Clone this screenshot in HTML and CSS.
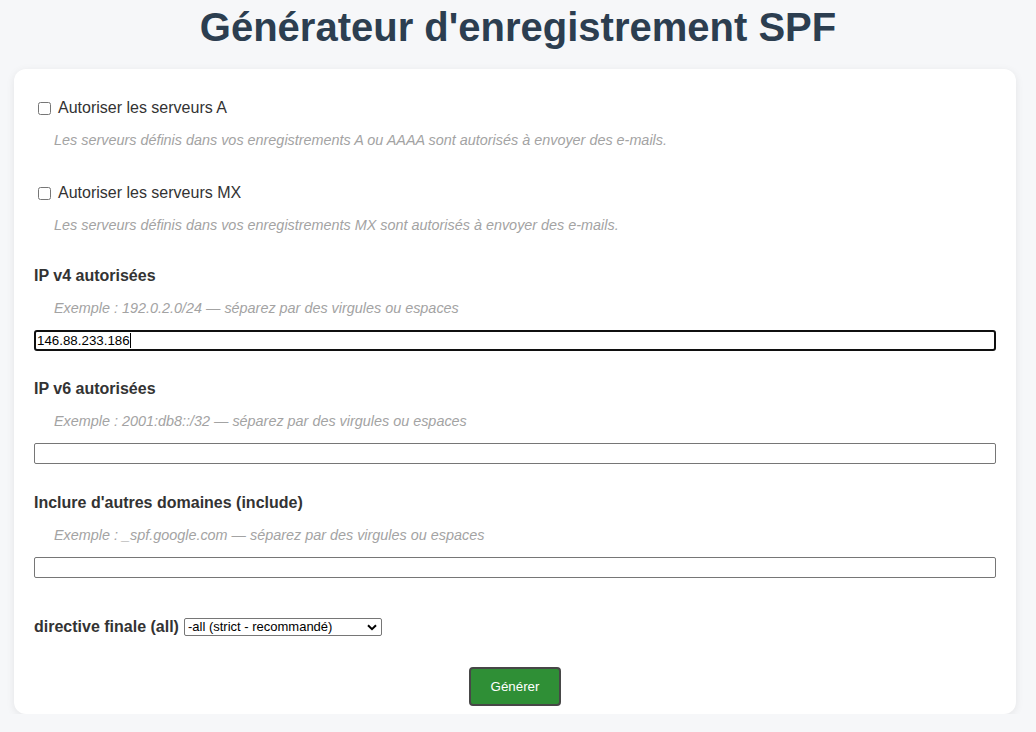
FILE: index.html
```html
<!DOCTYPE html>
<html lang="fr">
<head>
<meta charset="utf-8">
<title>Générateur d'enregistrement SPF</title>
<link rel="stylesheet" href="styles.css">
</head>
<body>
<h1 class="title">Générateur d'enregistrement SPF</h1>
<main class="card">
  <div class="group">
    <label class="check-row"><input type="checkbox" class="check"><span>Autoriser les serveurs A</span></label>
    <p class="desc">Les serveurs définis dans vos enregistrements A ou AAAA sont autorisés à envoyer des e-mails.</p>
  </div>
  <div class="group group-2">
    <label class="check-row"><input type="checkbox" class="check"><span>Autoriser les serveurs MX</span></label>
    <p class="desc">Les serveurs définis dans vos enregistrements MX sont autorisés à envoyer des e-mails.</p>
  </div>
  <div class="field">
    <label class="field-label" for="ip4">IP v4 autorisées</label>
    <p class="desc">Exemple : 192.0.2.0/24 — séparez par des virgules ou espaces</p>
    <div class="text-input focused"><span class="value">146.88.233.186</span><span class="caret"></span></div>
  </div>
  <div class="field field-2">
    <label class="field-label" for="ip6">IP v6 autorisées</label>
    <p class="desc">Exemple : 2001:db8::/32 — séparez par des virgules ou espaces</p>
    <input id="ip6" class="text-input" type="text">
  </div>
  <div class="field field-last">
    <label class="field-label" for="inc">Inclure d'autres domaines (include)</label>
    <p class="desc">Exemple : _spf.google.com — séparez par des virgules ou espaces</p>
    <input id="inc" class="text-input" type="text">
  </div>
  <div class="directive-row">
    <label class="field-label" for="all">directive finale (all)</label>
    <span class="select-wrap">
      <select id="all" class="select">
        <option>-all (strict - recommandé)</option>
        <option>~all (souple)</option>
        <option>?all (neutre)</option>
      </select>
      <svg class="chevron" width="10" height="7" viewBox="0 0 10 7"><path d="M1 1.2 L5 5.2 L9 1.2" fill="none" stroke="#000" stroke-width="2"/></svg>
    </span>
  </div>
  <div class="actions">
    <button class="btn" type="button">Générer</button>
  </div>
</main>
</body>
</html>
```
FILE: styles.css
```css
* { box-sizing: border-box; }

body {
  margin: 0;
  background: #f6f7f9;
  font-family: "Liberation Sans", Arial, sans-serif;
  color: #333;
}

.title {
  margin: 0;
  padding-top: 5px;
  height: 69px;
  text-align: center;
  font-size: 40px;
  line-height: 44px;
  font-weight: bold;
  color: #2c3e50;
}

.card {
  margin: 0 20px 0 14px;
  width: 1002px;
  background: #fff;
  border-radius: 12px;
  box-shadow: 0 2px 8px rgba(0, 0, 0, 0.08);
  padding: 29px 20px 8px;
}

.group { margin-bottom: 34px; }
.group-2 { margin-bottom: 32px; }

.check-row {
  display: flex;
  align-items: center;
  height: 20px;
  font-size: 16px;
  line-height: 20px;
  color: #333;
}

.check {
  width: 13px;
  height: 13px;
  margin: 0 7px 0 4px;
}

.desc {
  margin: 13px 0 0 20px;
  font-size: 14.4px;
  line-height: 18px;
  font-style: italic;
  color: #a3a3a3;
}

.field { margin-bottom: 28px; }
.field-2 { margin-bottom: 29px; }
.field-last { margin-bottom: 39px; }

.field-label {
  display: inline-block;
  font-size: 16px;
  line-height: 20px;
  font-weight: bold;
  color: #333;
}

.field .field-label { display: block; }

.text-input {
  display: block;
  width: 100%;
  height: 21px;
  margin-top: 13px;
  border: 1px solid #767676;
  border-radius: 2px;
  background: #fff;
  font-family: "Liberation Sans", Arial, sans-serif;
  font-size: 13.33px;
  padding: 0 2px;
}

.text-input.focused {
  display: flex;
  align-items: center;
  border: 2px solid #101010;
  border-radius: 3px;
  color: #000;
  padding: 0 1px;
}

.caret {
  display: inline-block;
  width: 1px;
  height: 15px;
  background: #000;
}

.directive-row {
  display: flex;
  align-items: center;
  height: 20px;
}

.select-wrap {
  position: relative;
  display: inline-block;
  margin-left: 5px;
}

.select {
  -webkit-appearance: none;
  appearance: none;
  display: block;
  width: 198px;
  height: 18px;
  border: 1px solid #767676;
  border-radius: 2px;
  background: #fff;
  font-family: "Liberation Sans", Arial, sans-serif;
  font-size: 13px;
  line-height: 16px;
  padding: 0 0 0 3px;
  color: #000;
}

.chevron {
  position: absolute;
  right: 5px;
  top: 6px;
  pointer-events: none;
}

.actions {
  display: flex;
  justify-content: center;
  margin-top: 30px;
}

.btn {
  width: 92px;
  height: 39px;
  background: #2f8f36;
  color: #fff;
  border: 2px solid #474747;
  border-radius: 4px;
  font-family: "Liberation Sans", Arial, sans-serif;
  font-size: 13.33px;
}
```
